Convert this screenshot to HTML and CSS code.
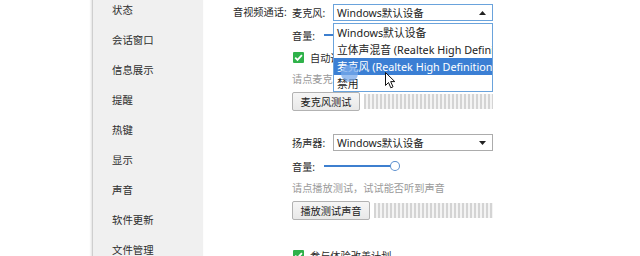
FILE: index.html
```html
<!DOCTYPE html>
<html lang="zh-CN">
<head>
<meta charset="utf-8">
<link rel="stylesheet" href="styles.css">
</head>
<body>
<div class="app">
  <div class="blank"></div>
  <nav class="side">
    <div class="nav-item">状态</div>
    <div class="nav-item">会话窗口</div>
    <div class="nav-item">信息展示</div>
    <div class="nav-item">提醒</div>
    <div class="nav-item">热键</div>
    <div class="nav-item">显示</div>
    <div class="nav-item">声音</div>
    <div class="nav-item">软件更新</div>
    <div class="nav-item">文件管理</div>
  </nav>
  <main class="main">
    <div class="section">
      <div class="sec-label">音视频通话:</div>
      <div class="sec-body">
        <div class="row row-select">
          <span class="lbl lbl-wide">麦克风:</span>
          <div class="select-wrap">
            <div class="select select-open">
              <span>Windows默认设备</span>
              <svg class="arrow" width="7" height="4" viewBox="0 0 7 4"><path d="M0 4 L3.5 0 L7 4 Z" fill="#222"/></svg>
            </div>
            <div class="dropdown">
              <div class="opt">Windows默认设备</div>
              <div class="opt">立体声混音 (Realtek High Definition Audio)</div>
              <div class="opt opt-sel">麦克风 (Realtek High Definition Audio)</div>
              <div class="opt">禁用</div>
              <div class="click-dot"></div>
              <svg class="cursor" width="11" height="17" viewBox="0 0 11 17"><path d="M0.5 0.5 L0.5 13.5 L3.5 10.5 L5.8 15.8 L8 14.8 L5.7 9.6 L9.8 9.6 Z" fill="#fff" stroke="#111" stroke-width="1" stroke-linejoin="round"/></svg>
            </div>
          </div>
        </div>
        <div class="row row-vol">
          <span class="lbl">音量:</span>
          <div class="slider"><div class="track"></div><div class="knob"></div></div>
        </div>
        <div class="row row-check">
          <svg class="check" width="11" height="11" viewBox="0 0 11 11"><rect x="0" y="0" width="11" height="11" rx="1" fill="#2fb24a"/><path d="M2.2 5.6 L4.5 7.9 L8.9 3.2" fill="none" stroke="#fff" stroke-width="1.8"/></svg>
          <span>自动调节麦克风音量</span>
        </div>
        <div class="row row-hint">请点麦克风测试，试试能否录到声音</div>
        <div class="row row-btn">
          <button class="btn btn-mic">麦克风测试</button>
          <div class="meter"></div>
        </div>

        <div class="row row-select row-speaker">
          <span class="lbl lbl-wide">扬声器:</span>
          <div class="select">
            <span>Windows默认设备</span>
            <svg class="arrow" width="7" height="4" viewBox="0 0 7 4"><path d="M0 0 L3.5 4 L7 0 Z" fill="#222"/></svg>
          </div>
        </div>
        <div class="row row-vol">
          <span class="lbl">音量:</span>
          <div class="slider"><div class="track"></div><div class="knob"></div></div>
        </div>
        <div class="row row-hint">请点播放测试，试试能否听到声音</div>
        <div class="row row-btn">
          <button class="btn btn-play">播放测试声音</button>
          <div class="meter"></div>
        </div>
        <div class="row row-check row-last">
          <svg class="check" width="11" height="11" viewBox="0 0 11 11"><rect x="0" y="0" width="11" height="11" rx="1" fill="#2fb24a"/><path d="M2.2 5.6 L4.5 7.9 L8.9 3.2" fill="none" stroke="#fff" stroke-width="1.8"/></svg>
          <span>参与体验改善计划</span>
        </div>
      </div>
    </div>
  </main>
</div>
</body>
</html>
```
FILE: styles.css
```css
* { box-sizing: border-box; }
html, body {
  margin: 0;
  padding: 0;
  width: 640px;
  height: 256px;
  overflow: hidden;
  background: #ffffff;
}
body {
  font-family: "Noto Sans", "Noto Sans CJK SC", sans-serif;
  font-size: 10.2px;
  color: #2a2a2a;
}
.app {
  display: flex;
  height: 256px;
}
.blank {
  width: 92px;
  flex: none;
  background: #ffffff;
}
.side {
  width: 111px;
  flex: none;
  background: #f0f0f0;
  border-left: 1px solid #cfcfcf;
  box-shadow: -1px 0 2px rgba(0, 0, 0, 0.12);
  display: flex;
  flex-direction: column;
  margin-top: -5px;
  height: 270px;
}
.nav-item {
  height: 30px;
  line-height: 30px;
  padding-left: 19px;
  color: #2e2e2e;
  font-size: 10.4px;
  white-space: nowrap;
}
.main {
  flex: 1;
  padding: 4px 0 0 30px;
}
.section {
  display: flex;
}
.sec-label {
  width: 59px;
  flex: none;
  height: 17px;
  line-height: 17px;
  white-space: nowrap;
}
.sec-body {
  width: 201px;
  display: flex;
  flex-direction: column;
}
.row {
  display: flex;
  align-items: center;
  white-space: nowrap;
}
.lbl { width: 32px; flex: none; }
.lbl-wide { width: 41px; }
.row-select { height: 17px; }
.select-wrap { position: relative; }
.select {
  width: 160px;
  height: 17px;
  border: 1px solid #acacac;
  background: #fff;
  display: flex;
  align-items: center;
  justify-content: space-between;
  padding: 0 6px 0 3px;
  color: #222;
  font-size: 10.5px;
}
.select-open { border-color: #6aa3dc; }
.arrow { flex: none; }
.dropdown {
  position: absolute;
  left: 0;
  top: 19px;
  width: 160px;
  height: 69px;
  border: 1px solid #6aa3dc;
  background: #fff;
  overflow: hidden;
  z-index: 5;
}
.opt {
  height: 17px;
  line-height: 17px;
  padding-left: 3px;
  color: #222;
  white-space: nowrap;
  overflow: hidden;
  font-size: 10.8px;
}
.opt-sel {
  background: #3b7fd4;
  color: #fff;
}
.click-dot {
  position: absolute;
  left: 7px;
  top: 41px;
  width: 17px;
  height: 17px;
  border-radius: 50%;
  background: rgba(120, 170, 235, 0.75);
}
.cursor {
  position: absolute;
  left: 51px;
  top: 48px;
}
.row-vol { height: 16px; margin-top: 6px; }
.slider {
  position: relative;
  width: 76px;
  height: 12px;
  display: flex;
  align-items: center;
}
.track {
  width: 69px;
  height: 1.5px;
  background: #3d7fcf;
}
.knob {
  width: 10px;
  height: 10px;
  border-radius: 50%;
  border: 1px solid #5b8fce;
  background: #fff;
  margin-left: -2px;
}
.row-check { height: 16px; margin-top: 6px; }
.check { margin: 0 6px 0 1px; flex: none; }
.row-hint { height: 16px; margin-top: 5px; color: #9a9a9a; }
.row-btn { height: 19px; margin-top: 6px; }
.btn {
  font: inherit;
  color: #222;
  height: 19px;
  border: 1px solid #b2b2b2;
  border-radius: 2px;
  background: linear-gradient(#f6f6f6, #e8e8e8);
  flex: none;
  padding: 0;
}
.btn-mic { width: 68px; }
.btn-play { width: 78px; }
.meter {
  flex: 1;
  height: 15px;
  margin-left: 4px;
  background: repeating-linear-gradient(90deg, #d4d4d4 0 2px, #f4f4f4 2px 4px);
}
.row-speaker { margin-top: 23px; }
.row-speaker + .row-vol { margin-top: 7px; }
.row-last { margin-top: 27px; }
```
